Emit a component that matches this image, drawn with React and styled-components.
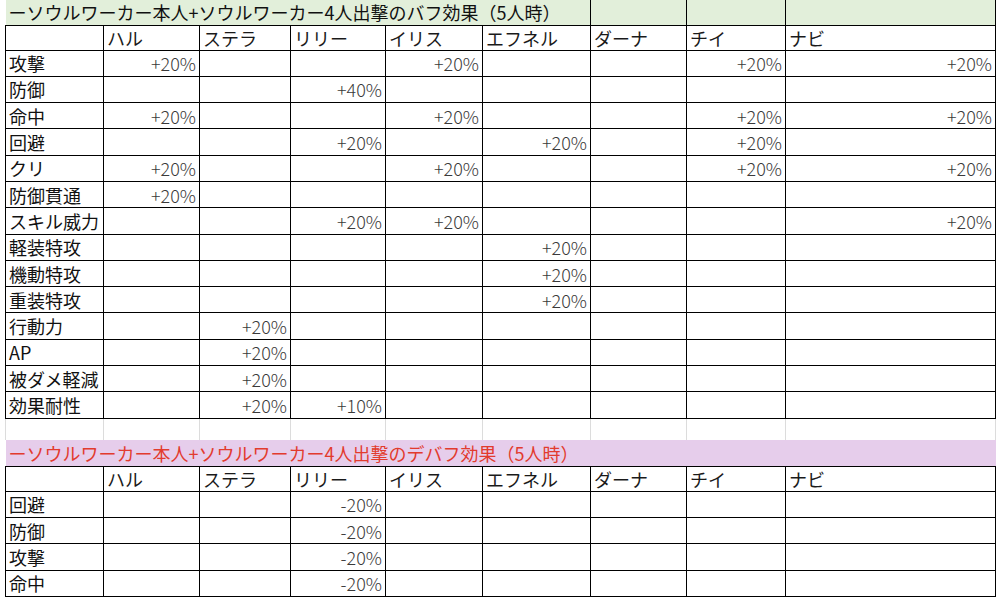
import React from "react";
import styled, { createGlobalStyle } from "styled-components";

const Global = createGlobalStyle`
  html, body { margin: 0; padding: 0; background: #fff; }
  body { font-family: "Noto Sans CJK JP", "Noto Sans", sans-serif; }
`;

const Page = styled.div`
  width: 998px;
  height: 599px;
  overflow: hidden;
  padding-left: 5px;
  box-sizing: border-box;
`;

const Sheet = styled.table`
  border-collapse: collapse;
  table-layout: fixed;
  width: 990px;
  font-size: 18px;
  line-height: 22px;
  color: #111;
`;

const Row = styled.tr`
  height: ${(p) => p.$h}px;
`;

const Cell = styled.td`
  border: 1px solid #000;
  padding: 0 3px;
  vertical-align: middle;
  white-space: nowrap;
  overflow: visible;
`;

const TitleCell = styled(Cell)`
  background: ${(p) => (p.$tone === "pink" ? "#e6cdeb" : "#e2efda")};
  color: ${(p) => (p.$tone === "pink" ? "#e23b2e" : "#111")};
  border-top: none;
  border-left: ${(p) => (p.$first ? "none" : "1px solid #000")};
  border-right: ${(p) => (p.$tone === "pink" ? "none" : "1px solid #000")};
  border-bottom: ${(p) => (p.$tone === "pink" ? "none" : "1px solid #000")};
`;

const HeadCell = styled(Cell)`
  text-align: left;
  color: #1a1a1a;
`;

const LabelCell = styled(Cell)`
  text-align: left;
  color: #111;
`;

const ValueCell = styled(Cell)`
  text-align: right;
  font-weight: 300;
  color: #3a3a3a;
  padding-right: 3px;
`;

const GapCell = styled.td`
  border-top: none;
  border-bottom: none;
  border-left: 1px solid #dcdcdc;
  border-right: 1px solid #dcdcdc;
  padding: 0;
`;

const widths = [98, 96, 91, 95, 97, 108, 96, 99, 210];
const names = ["ハル", "ステラ", "リリー", "イリス", "エフネル", "ダーナ", "チイ", "ナビ"];

const buffs = [
  ["攻撃", { 0: "+20%", 3: "+20%", 6: "+20%", 7: "+20%" }],
  ["防御", { 2: "+40%" }],
  ["命中", { 0: "+20%", 3: "+20%", 6: "+20%", 7: "+20%" }],
  ["回避", { 2: "+20%", 4: "+20%", 6: "+20%" }],
  ["クリ", { 0: "+20%", 3: "+20%", 6: "+20%", 7: "+20%" }],
  ["防御貫通", { 0: "+20%" }],
  ["スキル威力", { 2: "+20%", 3: "+20%", 7: "+20%" }],
  ["軽装特攻", { 4: "+20%" }],
  ["機動特攻", { 4: "+20%" }],
  ["重装特攻", { 4: "+20%" }],
  ["行動力", { 1: "+20%" }],
  ["AP", { 1: "+20%" }],
  ["被ダメ軽減", { 1: "+20%" }],
  ["効果耐性", { 1: "+20%", 2: "+10%" }],
];

const debuffs = [
  ["回避", { 2: "-20%" }],
  ["防御", { 2: "-20%" }],
  ["攻撃", { 2: "-20%" }],
  ["命中", { 2: "-20%" }],
];

function HeaderRow() {
  return (
    <Row $h={25}>
      <HeadCell />
      {names.map((n) => (
        <HeadCell key={n}>{n}</HeadCell>
      ))}
    </Row>
  );
}

function DataRows({ rows }) {
  return rows.map(([label, vals]) => (
    <Row $h={26.3} key={label}>
      <LabelCell>{label}</LabelCell>
      {names.map((n, i) => (
        <ValueCell key={n}>{vals[i] || ""}</ValueCell>
      ))}
    </Row>
  ));
}

export default function App() {
  return (
    <>
      <Global />
      <Page>
        <Sheet>
          <colgroup>
            {widths.map((w, i) => (
              <col key={i} style={{ width: w }} />
            ))}
          </colgroup>
          <tbody>
            <Row $h={25}>
              <TitleCell colSpan={6} $first>
                ーソウルワーカー本人+ソウルワーカー4人出撃のバフ効果（5人時）
              </TitleCell>
              <TitleCell />
              <TitleCell />
              <TitleCell />
            </Row>
            <HeaderRow />
            <DataRows rows={buffs} />
            <Row $h={22}>
              {widths.map((w, i) => (
                <GapCell key={i} />
              ))}
            </Row>
            <Row $h={26}>
              <TitleCell colSpan={10} $tone="pink" $first>
                ーソウルワーカー本人+ソウルワーカー4人出撃のデバフ効果（5人時）
              </TitleCell>
            </Row>
            <HeaderRow />
            <DataRows rows={debuffs} />
          </tbody>
        </Sheet>
      </Page>
    </>
  );
}
